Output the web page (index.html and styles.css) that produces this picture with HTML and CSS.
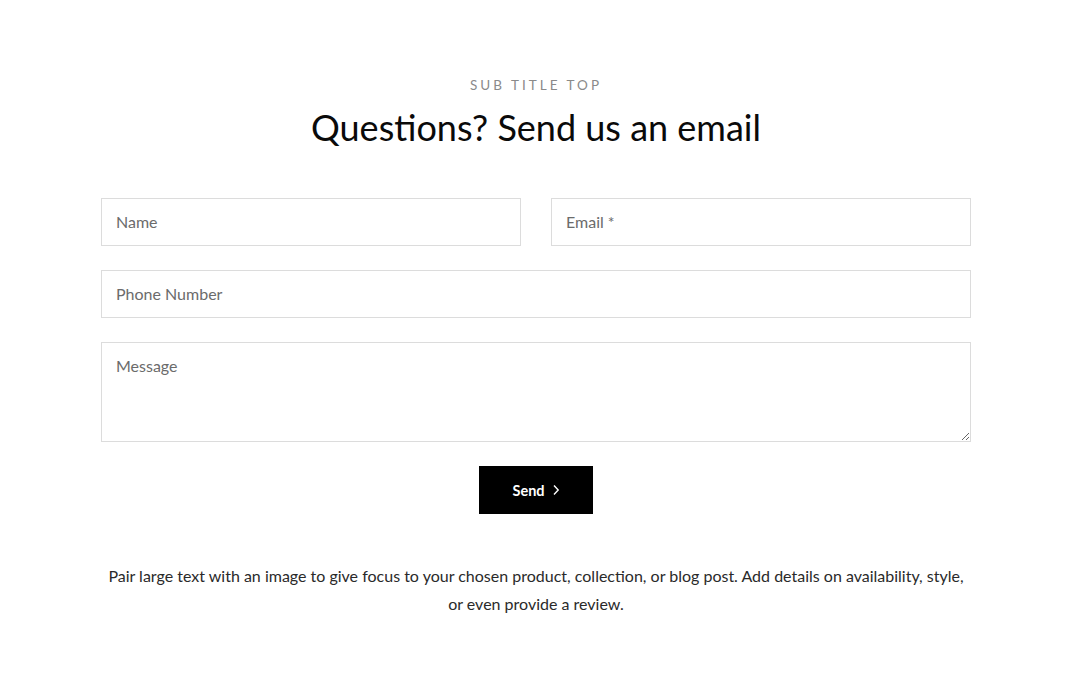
FILE: index.html
```html
<!DOCTYPE html>
<html lang="en">
<head>
<meta charset="utf-8">
<title>Contact</title>
<link rel="stylesheet" href="styles.css">
</head>
<body>
<section class="contact">
  <p class="subtitle">SUB TITLE TOP</p>
  <h2 class="title">Questions? Send us an email</h2>
  <form class="form">
    <div class="row two">
      <input class="field" type="text" placeholder="Name">
      <input class="field" type="email" placeholder="Email *">
    </div>
    <div class="row">
      <input class="field" type="tel" placeholder="Phone Number">
    </div>
    <div class="row">
      <textarea class="field area" placeholder="Message"></textarea>
    </div>
    <div class="actions">
      <button type="button" class="send">Send
        <svg class="chev" width="8" height="12" viewBox="0 0 8 12" aria-hidden="true"><path d="M2 1.5 L6.2 6 L2 10.5" fill="none" stroke="#fff" stroke-width="1.4"/></svg>
      </button>
    </div>
  </form>
  <p class="desc">Pair large text with an image to give focus to your chosen product, collection, or blog post. Add details on availability, style, or even provide a review.</p>
</section>
</body>
</html>
```
FILE: styles.css
```css
* { box-sizing: border-box; }
html, body { margin: 0; padding: 0; background: #fff; }
body { font-family: "Lato", "Noto Sans", sans-serif; color: #111; }
.contact {
  width: 870px;
  margin: 0 0 0 101px;
  padding-top: 76px;
  display: flex;
  flex-direction: column;
  align-items: center;
}
.subtitle {
  margin: 0;
  font-size: 13.5px;
  line-height: 18px;
  letter-spacing: 3px;
  color: #8a8a8a;
}
.title {
  margin: 11px 0 0;
  font-weight: 400;
  font-size: 36px;
  line-height: 44px;
  color: #0a0a0a;
}
.form {
  width: 100%;
  margin-top: 49px;
  display: flex;
  flex-direction: column;
  gap: 24px;
}
.row { display: flex; gap: 30px; }
.row.two .field { flex: 1; }
.field {
  width: 100%;
  height: 48px;
  border: 1px solid #dcdcdc;
  border-radius: 0;
  padding: 0 14px 1px;
  font-family: inherit;
  font-size: 16px;
  color: #333;
  background: #fff;
  outline: none;
}
.field::placeholder { color: #6b6b6b; }
.area {
  height: 100px;
  padding-top: 13px;
  resize: vertical;
  line-height: 20px;
}
.actions { display: flex; justify-content: center; }
.send {
  width: 114px;
  height: 48px;
  background: #000;
  color: #fff;
  border: none;
  border-radius: 0;
  font-family: inherit;
  font-weight: 700;
  font-size: 14.5px;
  display: flex;
  align-items: center;
  justify-content: center;
  gap: 7px;
  padding: 0;
}
.desc {
  margin: 48px 0 0;
  text-align: center;
  font-size: 16px;
  line-height: 28px;
  color: #2a2a2a;
}
```
